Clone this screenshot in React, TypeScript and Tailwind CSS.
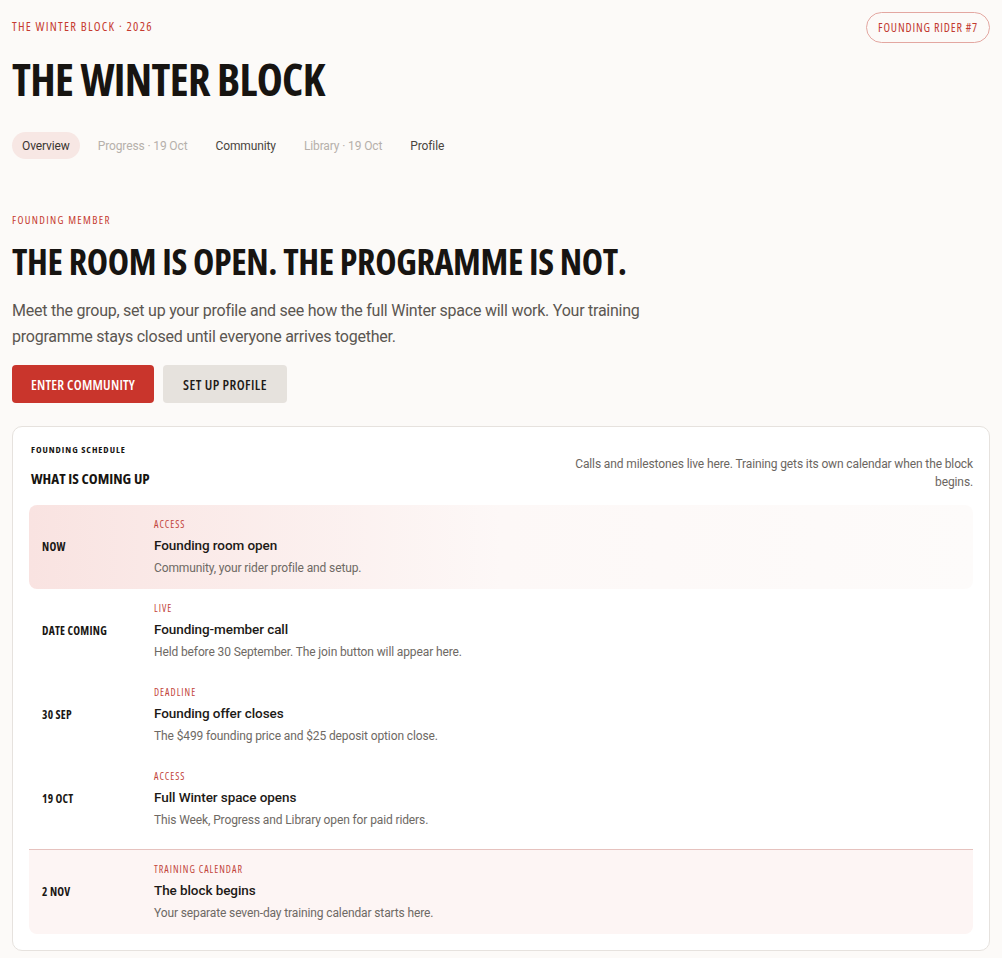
const NAV = [
  { label: "Overview", active: true, muted: false },
  { label: "Progress · 19 Oct", active: false, muted: true },
  { label: "Community", active: false, muted: false },
  { label: "Library · 19 Oct", active: false, muted: true },
  { label: "Profile", active: false, muted: false },
];

type Milestone = {
  when: string;
  tag: string;
  title: string;
  desc: string;
};

const SCHEDULE: Milestone[] = [
  { when: "NOW", tag: "ACCESS", title: "Founding room open", desc: "Community, your rider profile and setup." },
  { when: "DATE COMING", tag: "LIVE", title: "Founding-member call", desc: "Held before 30 September. The join button will appear here." },
  { when: "30 SEP", tag: "DEADLINE", title: "Founding offer closes", desc: "The $499 founding price and $25 deposit option close." },
  { when: "19 OCT", tag: "ACCESS", title: "Full Winter space opens", desc: "This Week, Progress and Library open for paid riders." },
];

const BLOCK_START: Milestone = {
  when: "2 NOV",
  tag: "TRAINING CALENDAR",
  title: "The block begins",
  desc: "Your separate seven-day training calendar starts here.",
};

function Row({ item, className }: { item: Milestone; className?: string }) {
  return (
    <div className={`flex items-center px-[13px] py-3 ${className ?? ""}`}>
      <div className="w-[112px] shrink-0 font-['Open_Sans'] [font-stretch:75%] font-bold text-[11.5px] tracking-[0.02em] text-[#1a1714]">
        {item.when}
      </div>
      <div className="flex flex-col">
        <div className="h-[14px] leading-[14px] font-['Open_Sans'] [font-stretch:75%] font-medium text-[10px] tracking-[0.1em] text-[#c2453b]">
          {item.tag}
        </div>
        <div className="mt-1 h-5 leading-5 text-[13.5px] font-medium text-[#1d1a17]">{item.title}</div>
        <div className="mt-1 h-[18px] leading-[18px] text-[12px] tracking-[-0.01em] text-[#6e6964]">{item.desc}</div>
      </div>
    </div>
  );
}

export default function App() {
  return (
    <div className="min-h-screen bg-[#fcfaf8] px-3 pt-3 pb-2 font-['Roboto',sans-serif] tracking-[-0.005em]">
      {/* Header */}
      <div className="flex items-center justify-between">
        <div className="font-['Open_Sans'] [font-stretch:75%] font-medium text-[12.5px] tracking-[0.1em] text-[#c63a30]">
          THE WINTER BLOCK · 2026
        </div>
        <div className="h-[31px] flex items-center rounded-full border border-[#e3a7a1] px-[11px] font-['Open_Sans'] [font-stretch:75%] font-medium text-[12px] tracking-[0.07em] text-[#c23a30]">
          FOUNDING RIDER #7
        </div>
      </div>

      <h1 className="mt-[14px] font-['Open_Sans'] [font-stretch:75%] font-bold text-[44px] leading-[44px] tracking-[-0.015em] text-[#171411]">
        THE WINTER BLOCK
      </h1>

      <nav className="mt-[31px] flex items-center gap-2">
        {NAV.map((n) => (
          <div
            key={n.label}
            className={`h-[27px] flex items-center rounded-full px-[10px] text-[12px] tracking-[-0.01em] ${
              n.active ? "bg-[#f7e7e4] text-[#3a3531]" : n.muted ? "text-[#b6b0ab]" : "text-[#4a4540]"
            }`}
          >
            {n.label}
          </div>
        ))}
      </nav>

      {/* Hero */}
      <div className="mt-[54px] h-[14px] leading-[14px] font-['Open_Sans'] [font-stretch:75%] font-medium text-[11px] tracking-[0.12em] text-[#c63a30]">
        FOUNDING MEMBER
      </div>
      <h2 className="mt-[17px] font-['Open_Sans'] [font-stretch:75%] font-bold text-[36px] leading-[36px] tracking-[-0.01em] text-[#171411]">
        THE ROOM IS OPEN. THE PROGRAMME IS NOT.
      </h2>
      <p className="mt-[18px] max-w-[640px] text-[16px] leading-[26px] tracking-[-0.015em] text-[#5b5651]">
        Meet the group, set up your profile and see how the full Winter space will work. Your training programme stays
        closed until everyone arrives together.
      </p>
      <div className="mt-[15px] flex gap-[9px]">
        <button className="h-[38px] rounded-[4px] bg-[#c9352c] px-[19px] font-['Open_Sans'] [font-stretch:75%] font-semibold text-[14px] tracking-[0.015em] text-white">
          ENTER COMMUNITY
        </button>
        <button className="h-[38px] rounded-[4px] bg-[#e6e2dd] px-5 font-['Open_Sans'] [font-stretch:75%] font-semibold text-[14px] tracking-[0.03em] text-[#1d1a17]">
          SET UP PROFILE
        </button>
      </div>

      {/* Schedule card */}
      <section className="mt-[23px] rounded-[10px] border border-[#e6e2de] bg-white px-4 pt-4 pb-4">
        <div className="flex items-start justify-between">
          <div>
            <div className="h-[14px] leading-[14px] pl-[2px] font-['Open_Sans'] [font-stretch:75%] font-bold text-[9.5px] tracking-[0.1em] text-[#171411]">
              FOUNDING SCHEDULE
            </div>
            <div className="mt-[11px] h-5 leading-5 pl-[2px] font-['Open_Sans'] [font-stretch:75%] font-bold text-[15px] tracking-[0em] text-[#171411]">
              WHAT IS COMING UP
            </div>
          </div>
          <p className="mt-3 max-w-[410px] text-right text-[12px] leading-[18px] tracking-[-0.01em] text-[#6b6661]">
            Calls and milestones live here. Training gets its own calendar when the block begins.
          </p>
        </div>

        <div className="mt-[14px]">
          {SCHEDULE.map((item, i) => (
            <Row
              key={item.title}
              item={item}
              className={i === 0 ? "rounded-lg bg-gradient-to-r from-[#f9e3e1] via-[#fdf8f7] to-[#fdfbfa]" : ""}
            />
          ))}
          <div className="mt-2 border-t border-[#e6c2be]">
            <Row item={BLOCK_START} className="rounded-b-lg bg-[#fdf5f4]" />
          </div>
        </div>
      </section>
    </div>
  );
}
